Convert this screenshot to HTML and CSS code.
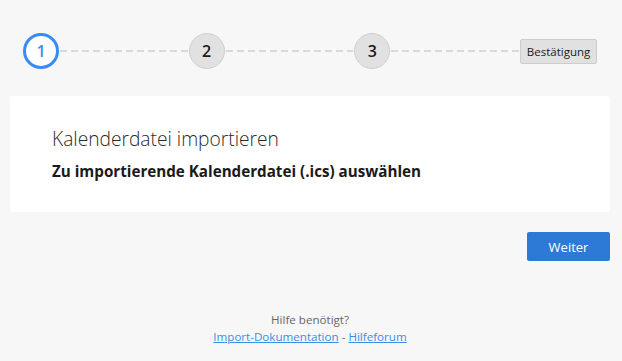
FILE: index.html
```html
<!DOCTYPE html>
<html lang="de">
<head>
    <meta charset="UTF-8">
    <meta name="viewport" content="width=device-width, initial-scale=1.0">
    <title>Kalenderdatei importieren</title>
    <link rel="stylesheet" href="styles.css">
</head>
<body>
    <div class="page">
        <!-- Schritte -->
        <div class="steps">
            <div class="step active">1</div>
            <div class="step-line"></div>
            <div class="step">2</div>
            <div class="step-line"></div>
            <div class="step">3</div>
            <div class="step-line"></div>
            <div class="step-final">Bestätigung</div>
        </div>

        <div class="card">
            <h1>Kalenderdatei importieren</h1>
            <h2>Zu importierende Kalenderdatei (.ics) auswählen</h2>
        </div>

        <div class="actions">
            <button class="btn-primary">Weiter</button>
        </div>

        <div class="help">
            <p>Hilfe benötigt?</p>
            <p><a href="#">Import-Dokumentation</a> - <a href="#">Hilfeforum</a></p>
        </div>
    </div>
</body>
</html>
```

FILE: styles.css
```css
:root {
    --bg: #f7f7f7;
    --blue: #3a8cf5;
    --button: #2d7ad6;
    --link: #3b8ee6;
    --text: #1a1a1a;
}

html, body {
    margin: 0;
    padding: 0;
}

body {
    background: var(--bg);
    font-family: "Open Sans", "Noto Sans", sans-serif;
    color: var(--text);
}

.page {
    padding: 33px 12px 0 10px;
}

/* Schritte */
.steps {
    display: flex;
    align-items: center;
    padding: 0 13px 0 13px;
    height: 36px;
}

.step {
    width: 36px;
    height: 36px;
    box-sizing: border-box;
    border-radius: 50%;
    background: #e1e1e1;
    border: 1px solid #cfcfcf;
    display: flex;
    align-items: center;
    justify-content: center;
    font-size: 16px;
    font-weight: 600;
    color: #1a1a1a;
    flex: none;
}

.step.active {
    background: #fff;
    border: 3px solid var(--blue);
    color: var(--blue);
}

.step-line {
    flex: 1;
    height: 2px;
    background: repeating-linear-gradient(90deg, #d9d9d9 0 7px, transparent 7px 11px);
    margin: 0 1px;
}

.step-final {
    flex: none;
    width: 77px;
    height: 25px;
    box-sizing: border-box;
    border: 1px solid #cdcdcd;
    border-radius: 2px;
    background: #e1e1e1;
    font-size: 11.5px;
    display: flex;
    align-items: center;
    justify-content: center;
}

.card {
    margin-top: 27px;
    background: #fff;
    border-radius: 3px;
    height: 116px;
    box-sizing: border-box;
    padding: 30px 42px 0;
}

.card h1 {
    margin: 0;
    font-size: 19.2px;
    font-weight: 300;
    color: #2a2a2a;
    line-height: 26px;
}

.card h2 {
    margin: 9px 0 0;
    font-size: 15.2px;
    font-weight: 700;
    line-height: 20px;
}

.actions {
    display: flex;
    justify-content: flex-end;
    margin-top: 20px;
}

.btn-primary {
    width: 83px;
    height: 29px;
    border: none;
    border-radius: 2px;
    background: var(--button);
    color: #fff;
    font-family: inherit;
    font-size: 13px;
    padding: 0;
}

.help {
    text-align: center;
    font-size: 11.6px;
    margin-top: 50px;
}

.help p {
    margin: 0;
    line-height: 17px;
    color: #666;
}

.help a {
    color: var(--link);
}
```
